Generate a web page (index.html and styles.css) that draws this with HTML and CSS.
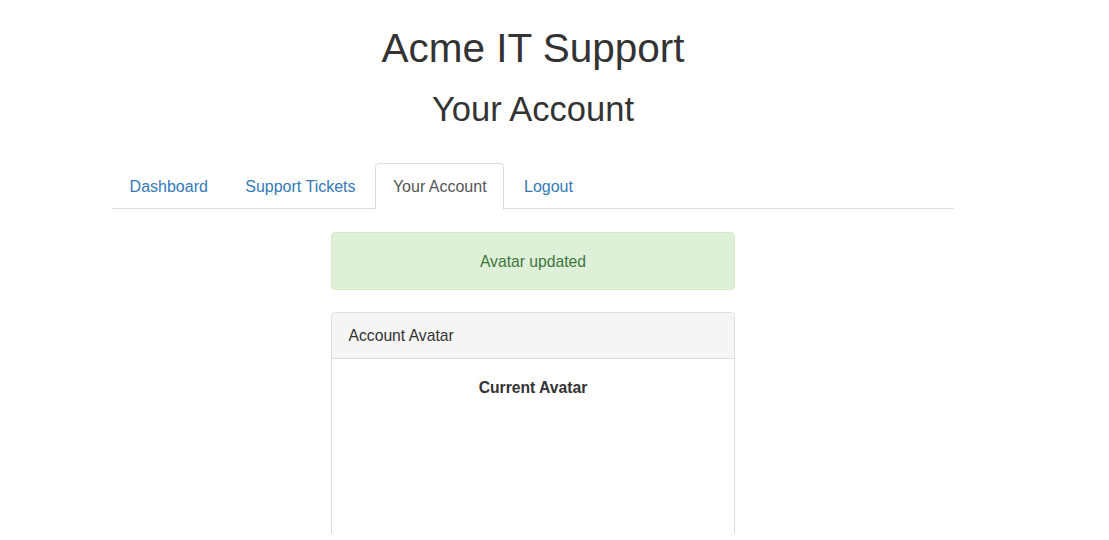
FILE: index.html
```html
<!DOCTYPE html>
<html lang="en">
<head>
<meta charset="utf-8">
<title>Acme IT Support - Your Account</title>
<link rel="stylesheet" href="styles.css">
</head>
<body>
<div class="viewport">
  <div class="page">
    <h1 class="site-title">Acme IT Support</h1>
    <h2 class="page-title">Your Account</h2>
    <ul class="nav-tabs">
      <li><a href="#">Dashboard</a></li>
      <li><a href="#">Support Tickets</a></li>
      <li class="active"><a href="#">Your Account</a></li>
      <li><a href="#">Logout</a></li>
    </ul>
    <div class="content">
      <div class="alert-success">Avatar updated</div>
      <div class="panel">
        <div class="panel-heading">Account Avatar</div>
        <div class="panel-body">
          <div class="avatar-label">Current Avatar</div>
        </div>
      </div>
    </div>
  </div>
</div>
</body>
</html>
```
FILE: styles.css
```css
html, body {
  margin: 0;
  padding: 0;
  background: #fff;
}
body {
  font-family: "Liberation Sans", Arial, Helvetica, sans-serif;
  font-size: 15.7px;
  line-height: 22.86px;
  color: #333;
}
.viewport {
  height: 534px;
  overflow: hidden;
}
.page {
  width: 1066px;
  display: flex;
  flex-direction: column;
  align-items: center;
}
.site-title {
  margin: 25.7px 0 0;
  font-size: 40.5px;
  line-height: 44.55px;
  font-weight: 500;
  color: #333;
}
.page-title {
  margin: 20.85px 0 0;
  font-size: 34.5px;
  line-height: 37.95px;
  font-weight: 500;
  color: #333;
}
.nav-tabs {
  list-style: none;
  margin: 34.35px 0 0;
  padding: 0;
  width: 842px;
  display: flex;
  border-bottom: 1px solid #ddd;
  height: 44.86px;
  font-size: 16px;
}
.nav-tabs li {
  margin-right: 2.2px;
  margin-bottom: -1px;
}
.nav-tabs a {
  display: block;
  padding: 11.5px 16.6px 10.5px;
  line-height: 22.86px;
  color: #337ab7;
  text-decoration: none;
  border: 1px solid transparent;
  border-radius: 4.4px 4.4px 0 0;
}
.nav-tabs li.active a {
  color: #555;
  background: #fff;
  border-color: #ddd #ddd transparent #ddd;
}
.content {
  width: 404px;
  margin-top: 22.6px;
  display: flex;
  flex-direction: column;
}
.alert-success {
  padding: 18px 16.5px 15px;
  border: 1px solid #d6e9c6;
  border-radius: 4.4px;
  background: #dff0d8;
  color: #3c763d;
  text-align: center;
  margin-bottom: 22px;
}
.panel {
  border: 1px solid #ddd;
  border-radius: 4.4px;
  background: #fff;
  box-shadow: 0 1px 1px rgba(0, 0, 0, 0.05);
}
.panel-heading {
  padding: 12.5px 16.5px 9.5px;
  background: #f5f5f5;
  border-bottom: 1px solid #ddd;
  border-radius: 3.4px 3.4px 0 0;
  color: #333;
}
.panel-body {
  padding: 18.5px 16.5px 16.5px;
  min-height: 260px;
}
.avatar-label {
  text-align: center;
  font-weight: bold;
}
```
